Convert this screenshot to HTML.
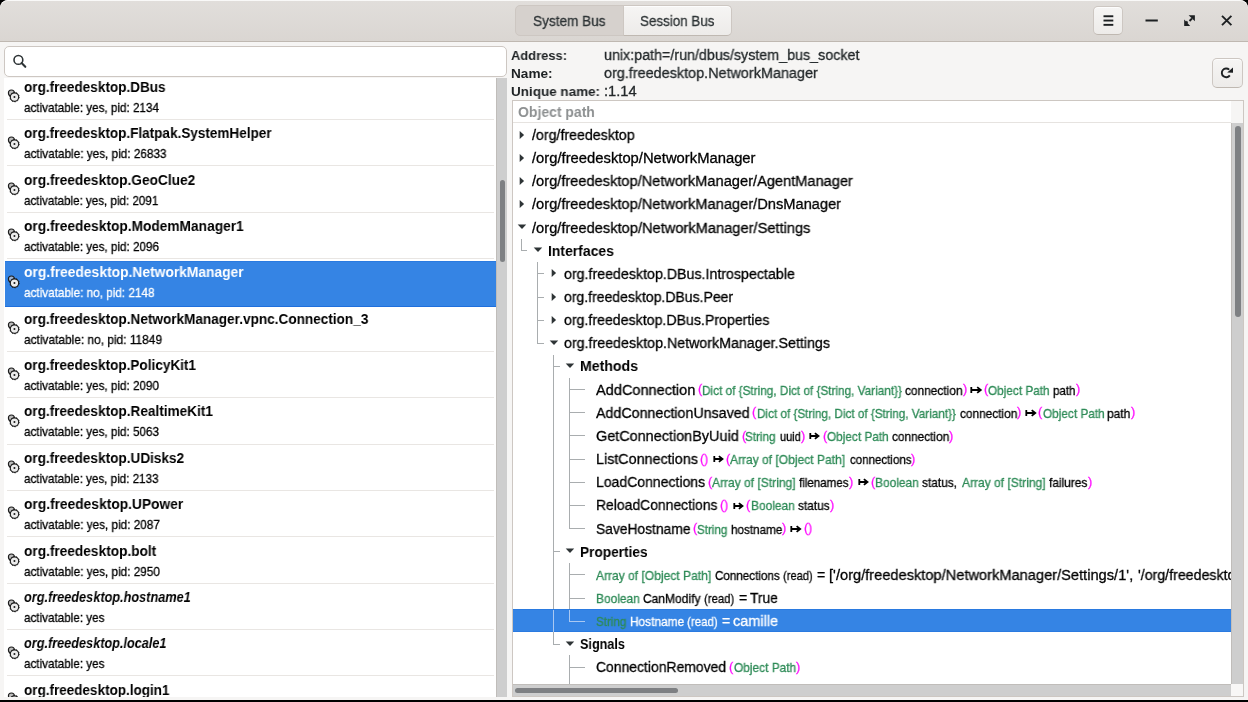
<!DOCTYPE html><html><head><meta charset="utf-8"><style>*{margin:0;padding:0;box-sizing:border-box}
html,body{width:1248px;height:702px;overflow:hidden;background:#000;font-family:"Liberation Sans", sans-serif}
.win{position:absolute;left:0;top:0;width:1248px;height:700px;background:#f6f5f4;border-radius:8px 8px 0 0;overflow:hidden}
.t{position:absolute;white-space:pre;transform-origin:0 0;will-change:transform}
.a{position:absolute}</style></head><body>
<div class="win">
<div class="a" style="left:0;top:0;width:1248px;height:42px;background:linear-gradient(to top,#dad6d2,#e1dedb);border-bottom:1px solid #bfb8b1;box-shadow:inset 0 1px rgba(255,255,255,0.8);border-radius:8px 8px 0 0"></div>
<div class="a" style="left:515px;top:5px;width:109px;height:31px;background:#d6d1cd;border:1px solid #cdc7c2;border-radius:5px 0 0 5px"></div>
<div class="a" style="left:623px;top:5px;width:109px;height:31px;background:linear-gradient(to top,#edebe9,#f6f5f4);border:1px solid #cdc7c2;border-bottom-color:#bfb8b1;border-radius:0 5px 5px 0;box-shadow:inset 0 1px rgba(255,255,255,0.8)"></div>
<div class="t" style="left:533.00px;top:13px;font-size:14.5px;font-weight:normal;font-style:normal;line-height:16.20px;color:#2e3436;-webkit-text-stroke:0.3px #2e3436;transform:scaleX(0.9385);">System Bus</div>
<div class="t" style="left:639.80px;top:13px;font-size:14.5px;font-weight:normal;font-style:normal;line-height:16.20px;color:#2e3436;-webkit-text-stroke:0.3px #2e3436;transform:scaleX(0.9242);">Session Bus</div>
<div class="a" style="left:1093px;top:6px;width:30px;height:29px;background:linear-gradient(to top,#edebe9,#f6f5f4);border:1px solid #cdc7c2;border-bottom-color:#bfb8b1;border-radius:5px;box-shadow:inset 0 1px rgba(255,255,255,0.8)"></div>
<svg class="a" style="left:0;top:0" width="1248" height="42"><g fill="#1d2022"><rect x="1103.5" y="15.3" width="9.8" height="1.9"/><rect x="1103.5" y="19.6" width="9.8" height="1.9"/><rect x="1103.5" y="23.9" width="9.8" height="1.9"/><rect x="1145.5" y="19.5" width="12.3" height="2"/><path d="M1188.6 15.2 L1194.9 15.2 L1194.9 21.2 Z"/><path d="M1184.2 19.6 L1184.2 25.9 L1190.2 25.9 Z"/></g><g stroke="#1d2022" stroke-width="1.9" fill="none"><path d="M1222 15.8 L1231.4 25.2 M1231.4 15.8 L1222 25.2"/><path d="M1189.5 21 L1192 18.5 M1185.5 23.5 L1187.5 21.5"/></g></svg>
<div class="a" style="left:4px;top:46px;width:503px;height:31px;background:#fff;border:1px solid #cdc7c2;border-radius:5px"></div>
<svg class="a" style="left:12px;top:53px" width="16" height="16"><circle cx="6.4" cy="6.9" r="4.4" fill="none" stroke="#2e3436" stroke-width="1.6"/><path d="M9.6 10.1 L13.3 13.8" stroke="#2e3436" stroke-width="2.1" stroke-linecap="round"/></svg>
<div class="a" style="left:4px;top:78px;width:492px;height:619px;background:#fff;overflow:hidden">
<div class="t" style="left:20.40px;top:1px;font-size:14.4px;font-weight:bold;font-style:normal;line-height:16.08px;color:#000;transform:scaleX(0.9418);">org.freedesktop.DBus</div>
<div class="t" style="left:20.40px;top:23px;font-size:12.9px;font-weight:normal;font-style:normal;line-height:14.41px;color:#000;-webkit-text-stroke:0.3px #000;transform:scaleX(0.9050);">activatable: yes, pid: 2134</div>
<svg class="a" style="left:0px;top:8.30px" width="20" height="20" viewBox="0 0 20 20"><circle cx="7.4" cy="7.0" r="3.0" fill="#bcbcbc" stroke="#1c1c1c" stroke-width="1.1"/><circle cx="10.5" cy="11.1" r="4.75" fill="none" stroke="#1c1c1c" stroke-width="0.9" stroke-dasharray="1.2 1.75"/><circle cx="10.5" cy="11.1" r="4.2" fill="#ececec" stroke="#1c1c1c" stroke-width="1.15"/><circle cx="10.45" cy="10.95" r="1.0" fill="#1c1c1c"/></svg>
<div class="a" style="left:2.5px;top:41.10px;width:487px;height:1px;background:#e9e6e3"></div>
<div class="t" style="left:20.40px;top:47px;font-size:14.4px;font-weight:bold;font-style:normal;line-height:16.08px;color:#000;transform:scaleX(0.9410);">org.freedesktop.Flatpak.SystemHelper</div>
<div class="t" style="left:20.40px;top:69px;font-size:12.9px;font-weight:normal;font-style:normal;line-height:14.41px;color:#000;-webkit-text-stroke:0.3px #000;transform:scaleX(0.9121);">activatable: yes, pid: 26833</div>
<svg class="a" style="left:0px;top:54.65px" width="20" height="20" viewBox="0 0 20 20"><circle cx="7.4" cy="7.0" r="3.0" fill="#bcbcbc" stroke="#1c1c1c" stroke-width="1.1"/><circle cx="10.5" cy="11.1" r="4.75" fill="none" stroke="#1c1c1c" stroke-width="0.9" stroke-dasharray="1.2 1.75"/><circle cx="10.5" cy="11.1" r="4.2" fill="#ececec" stroke="#1c1c1c" stroke-width="1.15"/><circle cx="10.45" cy="10.95" r="1.0" fill="#1c1c1c"/></svg>
<div class="a" style="left:2.5px;top:87.45px;width:487px;height:1px;background:#e9e6e3"></div>
<div class="t" style="left:20.40px;top:94px;font-size:14.4px;font-weight:bold;font-style:normal;line-height:16.08px;color:#000;transform:scaleX(0.9514);">org.freedesktop.GeoClue2</div>
<div class="t" style="left:20.40px;top:116px;font-size:12.9px;font-weight:normal;font-style:normal;line-height:14.41px;color:#000;-webkit-text-stroke:0.3px #000;transform:scaleX(0.9003);">activatable: yes, pid: 2091</div>
<svg class="a" style="left:0px;top:101.00px" width="20" height="20" viewBox="0 0 20 20"><circle cx="7.4" cy="7.0" r="3.0" fill="#bcbcbc" stroke="#1c1c1c" stroke-width="1.1"/><circle cx="10.5" cy="11.1" r="4.75" fill="none" stroke="#1c1c1c" stroke-width="0.9" stroke-dasharray="1.2 1.75"/><circle cx="10.5" cy="11.1" r="4.2" fill="#ececec" stroke="#1c1c1c" stroke-width="1.15"/><circle cx="10.45" cy="10.95" r="1.0" fill="#1c1c1c"/></svg>
<div class="a" style="left:2.5px;top:133.80px;width:487px;height:1px;background:#e9e6e3"></div>
<div class="t" style="left:20.40px;top:140px;font-size:14.4px;font-weight:bold;font-style:normal;line-height:16.08px;color:#000;transform:scaleX(0.9539);">org.freedesktop.ModemManager1</div>
<div class="t" style="left:20.40px;top:162px;font-size:12.9px;font-weight:normal;font-style:normal;line-height:14.41px;color:#000;-webkit-text-stroke:0.3px #000;transform:scaleX(0.9050);">activatable: yes, pid: 2096</div>
<svg class="a" style="left:0px;top:147.35px" width="20" height="20" viewBox="0 0 20 20"><circle cx="7.4" cy="7.0" r="3.0" fill="#bcbcbc" stroke="#1c1c1c" stroke-width="1.1"/><circle cx="10.5" cy="11.1" r="4.75" fill="none" stroke="#1c1c1c" stroke-width="0.9" stroke-dasharray="1.2 1.75"/><circle cx="10.5" cy="11.1" r="4.2" fill="#ececec" stroke="#1c1c1c" stroke-width="1.15"/><circle cx="10.45" cy="10.95" r="1.0" fill="#1c1c1c"/></svg>
<div class="a" style="left:0.5px;top:183px;width:491.5px;height:46px;background:#3584e4;border-top:1px solid #2a7ae0;border-bottom:1px solid #1f6fdc"></div>
<div class="a" style="left:2.5px;top:180.15px;width:487px;height:1px;background:#e9e6e3"></div>
<div class="t" style="left:20.40px;top:186px;font-size:14.4px;font-weight:bold;font-style:normal;line-height:16.08px;color:#fff;transform:scaleX(0.9606);">org.freedesktop.NetworkManager</div>
<div class="t" style="left:20.40px;top:208px;font-size:12.9px;font-weight:normal;font-style:normal;line-height:14.41px;color:#fff;-webkit-text-stroke:0.3px #fff;transform:scaleX(0.9104);">activatable: no, pid: 2148</div>
<svg class="a" style="left:0px;top:193.70px" width="20" height="20" viewBox="0 0 20 20"><circle cx="7.4" cy="7.0" r="3.0" fill="#9fb6d6" stroke="#1c1c1c" stroke-width="1.1"/><circle cx="10.5" cy="11.1" r="4.75" fill="none" stroke="#1c1c1c" stroke-width="0.9" stroke-dasharray="1.2 1.75"/><circle cx="10.5" cy="11.1" r="4.2" fill="#ececec" stroke="#1c1c1c" stroke-width="1.15"/><circle cx="10.45" cy="10.95" r="1.0" fill="#1c1c1c"/></svg>
<div class="t" style="left:20.40px;top:233px;font-size:14.4px;font-weight:bold;font-style:normal;line-height:16.08px;color:#000;transform:scaleX(0.9442);">org.freedesktop.NetworkManager.vpnc.Connection_3</div>
<div class="t" style="left:20.40px;top:255px;font-size:12.9px;font-weight:normal;font-style:normal;line-height:14.41px;color:#000;-webkit-text-stroke:0.3px #000;transform:scaleX(0.9228);">activatable: no, pid: 11849</div>
<svg class="a" style="left:0px;top:240.05px" width="20" height="20" viewBox="0 0 20 20"><circle cx="7.4" cy="7.0" r="3.0" fill="#bcbcbc" stroke="#1c1c1c" stroke-width="1.1"/><circle cx="10.5" cy="11.1" r="4.75" fill="none" stroke="#1c1c1c" stroke-width="0.9" stroke-dasharray="1.2 1.75"/><circle cx="10.5" cy="11.1" r="4.2" fill="#ececec" stroke="#1c1c1c" stroke-width="1.15"/><circle cx="10.45" cy="10.95" r="1.0" fill="#1c1c1c"/></svg>
<div class="a" style="left:2.5px;top:272.85px;width:487px;height:1px;background:#e9e6e3"></div>
<div class="t" style="left:20.40px;top:279px;font-size:14.4px;font-weight:bold;font-style:normal;line-height:16.08px;color:#000;transform:scaleX(0.9433);">org.freedesktop.PolicyKit1</div>
<div class="t" style="left:20.40px;top:301px;font-size:12.9px;font-weight:normal;font-style:normal;line-height:14.41px;color:#000;-webkit-text-stroke:0.3px #000;transform:scaleX(0.9050);">activatable: yes, pid: 2090</div>
<svg class="a" style="left:0px;top:286.40px" width="20" height="20" viewBox="0 0 20 20"><circle cx="7.4" cy="7.0" r="3.0" fill="#bcbcbc" stroke="#1c1c1c" stroke-width="1.1"/><circle cx="10.5" cy="11.1" r="4.75" fill="none" stroke="#1c1c1c" stroke-width="0.9" stroke-dasharray="1.2 1.75"/><circle cx="10.5" cy="11.1" r="4.2" fill="#ececec" stroke="#1c1c1c" stroke-width="1.15"/><circle cx="10.45" cy="10.95" r="1.0" fill="#1c1c1c"/></svg>
<div class="a" style="left:2.5px;top:319.20px;width:487px;height:1px;background:#e9e6e3"></div>
<div class="t" style="left:20.40px;top:325px;font-size:14.4px;font-weight:bold;font-style:normal;line-height:16.08px;color:#000;transform:scaleX(0.9443);">org.freedesktop.RealtimeKit1</div>
<div class="t" style="left:20.40px;top:347px;font-size:12.9px;font-weight:normal;font-style:normal;line-height:14.41px;color:#000;-webkit-text-stroke:0.3px #000;transform:scaleX(0.9050);">activatable: yes, pid: 5063</div>
<svg class="a" style="left:0px;top:332.75px" width="20" height="20" viewBox="0 0 20 20"><circle cx="7.4" cy="7.0" r="3.0" fill="#bcbcbc" stroke="#1c1c1c" stroke-width="1.1"/><circle cx="10.5" cy="11.1" r="4.75" fill="none" stroke="#1c1c1c" stroke-width="0.9" stroke-dasharray="1.2 1.75"/><circle cx="10.5" cy="11.1" r="4.2" fill="#ececec" stroke="#1c1c1c" stroke-width="1.15"/><circle cx="10.45" cy="10.95" r="1.0" fill="#1c1c1c"/></svg>
<div class="a" style="left:2.5px;top:365.55px;width:487px;height:1px;background:#e9e6e3"></div>
<div class="t" style="left:20.40px;top:372px;font-size:14.4px;font-weight:bold;font-style:normal;line-height:16.08px;color:#000;transform:scaleX(0.9443);">org.freedesktop.UDisks2</div>
<div class="t" style="left:20.40px;top:394px;font-size:12.9px;font-weight:normal;font-style:normal;line-height:14.41px;color:#000;-webkit-text-stroke:0.3px #000;transform:scaleX(0.9023);">activatable: yes, pid: 2133</div>
<svg class="a" style="left:0px;top:379.10px" width="20" height="20" viewBox="0 0 20 20"><circle cx="7.4" cy="7.0" r="3.0" fill="#bcbcbc" stroke="#1c1c1c" stroke-width="1.1"/><circle cx="10.5" cy="11.1" r="4.75" fill="none" stroke="#1c1c1c" stroke-width="0.9" stroke-dasharray="1.2 1.75"/><circle cx="10.5" cy="11.1" r="4.2" fill="#ececec" stroke="#1c1c1c" stroke-width="1.15"/><circle cx="10.45" cy="10.95" r="1.0" fill="#1c1c1c"/></svg>
<div class="a" style="left:2.5px;top:411.90px;width:487px;height:1px;background:#e9e6e3"></div>
<div class="t" style="left:20.40px;top:418px;font-size:14.4px;font-weight:bold;font-style:normal;line-height:16.08px;color:#000;transform:scaleX(0.9571);">org.freedesktop.UPower</div>
<div class="t" style="left:20.40px;top:440px;font-size:12.9px;font-weight:normal;font-style:normal;line-height:14.41px;color:#000;-webkit-text-stroke:0.3px #000;transform:scaleX(0.9110);">activatable: yes, pid: 2087</div>
<svg class="a" style="left:0px;top:425.45px" width="20" height="20" viewBox="0 0 20 20"><circle cx="7.4" cy="7.0" r="3.0" fill="#bcbcbc" stroke="#1c1c1c" stroke-width="1.1"/><circle cx="10.5" cy="11.1" r="4.75" fill="none" stroke="#1c1c1c" stroke-width="0.9" stroke-dasharray="1.2 1.75"/><circle cx="10.5" cy="11.1" r="4.2" fill="#ececec" stroke="#1c1c1c" stroke-width="1.15"/><circle cx="10.45" cy="10.95" r="1.0" fill="#1c1c1c"/></svg>
<div class="a" style="left:2.5px;top:458.25px;width:487px;height:1px;background:#e9e6e3"></div>
<div class="t" style="left:20.40px;top:465px;font-size:14.4px;font-weight:bold;font-style:normal;line-height:16.08px;color:#000;transform:scaleX(0.9509);">org.freedesktop.bolt</div>
<div class="t" style="left:20.40px;top:487px;font-size:12.9px;font-weight:normal;font-style:normal;line-height:14.41px;color:#000;-webkit-text-stroke:0.3px #000;transform:scaleX(0.9110);">activatable: yes, pid: 2950</div>
<svg class="a" style="left:0px;top:471.80px" width="20" height="20" viewBox="0 0 20 20"><circle cx="7.4" cy="7.0" r="3.0" fill="#bcbcbc" stroke="#1c1c1c" stroke-width="1.1"/><circle cx="10.5" cy="11.1" r="4.75" fill="none" stroke="#1c1c1c" stroke-width="0.9" stroke-dasharray="1.2 1.75"/><circle cx="10.5" cy="11.1" r="4.2" fill="#ececec" stroke="#1c1c1c" stroke-width="1.15"/><circle cx="10.45" cy="10.95" r="1.0" fill="#1c1c1c"/></svg>
<div class="a" style="left:2.5px;top:504.60px;width:487px;height:1px;background:#e9e6e3"></div>
<div class="t" style="left:20.40px;top:511px;font-size:14.4px;font-weight:bold;font-style:italic;line-height:16.08px;color:#000;transform:scaleX(0.8833);">org.freedesktop.hostname1</div>
<div class="t" style="left:20.40px;top:533px;font-size:12.9px;font-weight:normal;font-style:normal;line-height:14.41px;color:#000;-webkit-text-stroke:0.3px #000;transform:scaleX(0.9048);">activatable: yes</div>
<svg class="a" style="left:0px;top:518.15px" width="20" height="20" viewBox="0 0 20 20"><circle cx="7.4" cy="7.0" r="3.0" fill="#bcbcbc" stroke="#1c1c1c" stroke-width="1.1"/><circle cx="10.5" cy="11.1" r="4.75" fill="none" stroke="#1c1c1c" stroke-width="0.9" stroke-dasharray="1.2 1.75"/><circle cx="10.5" cy="11.1" r="4.2" fill="#ececec" stroke="#1c1c1c" stroke-width="1.15"/><circle cx="10.45" cy="10.95" r="1.0" fill="#1c1c1c"/></svg>
<div class="a" style="left:2.5px;top:550.95px;width:487px;height:1px;background:#e9e6e3"></div>
<div class="t" style="left:20.40px;top:557px;font-size:14.4px;font-weight:bold;font-style:italic;line-height:16.08px;color:#000;transform:scaleX(0.8820);">org.freedesktop.locale1</div>
<div class="t" style="left:20.40px;top:579px;font-size:12.9px;font-weight:normal;font-style:normal;line-height:14.41px;color:#000;-webkit-text-stroke:0.3px #000;transform:scaleX(0.9048);">activatable: yes</div>
<svg class="a" style="left:0px;top:564.50px" width="20" height="20" viewBox="0 0 20 20"><circle cx="7.4" cy="7.0" r="3.0" fill="#bcbcbc" stroke="#1c1c1c" stroke-width="1.1"/><circle cx="10.5" cy="11.1" r="4.75" fill="none" stroke="#1c1c1c" stroke-width="0.9" stroke-dasharray="1.2 1.75"/><circle cx="10.5" cy="11.1" r="4.2" fill="#ececec" stroke="#1c1c1c" stroke-width="1.15"/><circle cx="10.45" cy="10.95" r="1.0" fill="#1c1c1c"/></svg>
<div class="a" style="left:2.5px;top:597.30px;width:487px;height:1px;background:#e9e6e3"></div>
<div class="t" style="left:20.40px;top:604px;font-size:14.4px;font-weight:bold;font-style:normal;line-height:16.08px;color:#000;transform:scaleX(0.9380);">org.freedesktop.login1</div>
<div class="t" style="left:20.40px;top:626px;font-size:12.9px;font-weight:normal;font-style:normal;line-height:14.41px;color:#000;-webkit-text-stroke:0.3px #000;transform:scaleX(0.9048);">activatable: yes</div>
<svg class="a" style="left:0px;top:610.85px" width="20" height="20" viewBox="0 0 20 20"><circle cx="7.4" cy="7.0" r="3.0" fill="#bcbcbc" stroke="#1c1c1c" stroke-width="1.1"/><circle cx="10.5" cy="11.1" r="4.75" fill="none" stroke="#1c1c1c" stroke-width="0.9" stroke-dasharray="1.2 1.75"/><circle cx="10.5" cy="11.1" r="4.2" fill="#ececec" stroke="#1c1c1c" stroke-width="1.15"/><circle cx="10.45" cy="10.95" r="1.0" fill="#1c1c1c"/></svg>
</div>
<div class="a" style="left:496px;top:78px;width:11px;height:619px;background:#cecece;border-left:1px solid #c0bdba"></div>
<div class="a" style="left:499.5px;top:180px;width:5.5px;height:82px;background:#7e8083;border-radius:3px"></div>
<div class="t" style="left:511.40px;top:48px;font-size:13.6px;font-weight:bold;font-style:normal;line-height:15.19px;color:#1d2123;transform:scaleX(0.9504);">Address:</div>
<div class="t" style="left:511.40px;top:66px;font-size:13.6px;font-weight:bold;font-style:normal;line-height:15.19px;color:#1d2123;transform:scaleX(1.0009);">Name:</div>
<div class="t" style="left:511.40px;top:84px;font-size:13.6px;font-weight:bold;font-style:normal;line-height:15.19px;color:#1d2123;transform:scaleX(0.9912);">Unique name:</div>
<div class="t" style="left:604.00px;top:47px;font-size:14.7px;font-weight:normal;font-style:normal;line-height:16.42px;color:#23282a;-webkit-text-stroke:0.3px #23282a;transform:scaleX(0.9730);">unix:path=/run/dbus/system_bus_socket</div>
<div class="t" style="left:604.00px;top:65px;font-size:14.7px;font-weight:normal;font-style:normal;line-height:16.42px;color:#23282a;-webkit-text-stroke:0.3px #23282a;transform:scaleX(0.9808);">org.freedesktop.NetworkManager</div>
<div class="t" style="left:604.00px;top:83px;font-size:14.7px;font-weight:normal;font-style:normal;line-height:16.42px;color:#23282a;-webkit-text-stroke:0.3px #23282a;transform:scaleX(0.9917);">:1.14</div>
<div class="a" style="left:1212px;top:58px;width:31px;height:30px;background:linear-gradient(to top,#edebe9,#f6f5f4);border:1px solid #cdc7c2;border-bottom-color:#bfb8b1;border-radius:5px;box-shadow:inset 0 1px rgba(255,255,255,0.8)"></div>
<svg class="a" style="left:0;top:0" width="1248" height="100"><path d="M1229.8 75.4 A4.4 4.4 0 1 1 1229.2 69.6" fill="none" stroke="#1d2022" stroke-width="1.9"/><path d="M1227.2 72.6 L1233 67.4 L1233 72.8 Z" fill="#1d2022"/></svg>
<div class="a" style="left:512px;top:100px;width:732px;height:597px;background:#fff;border:1px solid #cdc7c2"></div>
<div class="a" style="left:513px;top:101px;width:718px;height:22px;background:#fff;border-bottom:1px solid #e6e3e0"></div>
<div class="a" style="left:1231px;top:101px;width:12px;height:22px;background:#f6f5f4"></div>
<div class="t" style="left:517.90px;top:105px;font-size:14.2px;font-weight:bold;font-style:normal;line-height:15.86px;color:#8d9091;transform:scaleX(0.9853);">Object path</div>
<div class="a" style="left:513px;top:123px;width:718px;height:561px;overflow:hidden">
<div class="a" style="left:0;top:486px;width:718px;height:23px;background:#3584e4;border-top:1px solid #2a7ae0;border-bottom:1px solid #2a7ae0"></div>
<div class="a" style="left:8px;top:115.75px;width:1px;height:12.00px;background:#a9adaf"></div>
<div class="a" style="left:8px;top:127.25px;width:6px;height:1px;background:#a9adaf"></div>
<div class="a" style="left:24px;top:138.90px;width:1px;height:81.45px;background:#a9adaf"></div>
<div class="a" style="left:24px;top:150.40px;width:7px;height:1px;background:#a9adaf"></div>
<div class="a" style="left:24px;top:173.55px;width:7px;height:1px;background:#a9adaf"></div>
<div class="a" style="left:24px;top:196.70px;width:7px;height:1px;background:#a9adaf"></div>
<div class="a" style="left:24px;top:219.85px;width:7px;height:1px;background:#a9adaf"></div>
<div class="a" style="left:40px;top:231.50px;width:1px;height:254.50px;background:#a9adaf"></div>
<div class="a" style="left:40px;top:487.00px;width:1px;height:22.00px;background:#a9c8f2"></div>
<div class="a" style="left:40px;top:509.00px;width:1px;height:12.30px;background:#a9adaf"></div>
<div class="a" style="left:40px;top:243.00px;width:7px;height:1px;background:#a9adaf"></div>
<div class="a" style="left:40px;top:428.20px;width:7px;height:1px;background:#a9adaf"></div>
<div class="a" style="left:40px;top:520.80px;width:7px;height:1px;background:#a9adaf"></div>
<div class="a" style="left:56px;top:254.65px;width:1px;height:150.90px;background:#a9adaf"></div>
<div class="a" style="left:56px;top:266.15px;width:16px;height:1px;background:#a9adaf"></div>
<div class="a" style="left:56px;top:289.30px;width:16px;height:1px;background:#a9adaf"></div>
<div class="a" style="left:56px;top:312.45px;width:16px;height:1px;background:#a9adaf"></div>
<div class="a" style="left:56px;top:335.60px;width:16px;height:1px;background:#a9adaf"></div>
<div class="a" style="left:56px;top:358.75px;width:16px;height:1px;background:#a9adaf"></div>
<div class="a" style="left:56px;top:381.90px;width:16px;height:1px;background:#a9adaf"></div>
<div class="a" style="left:56px;top:405.05px;width:16px;height:1px;background:#a9adaf"></div>
<div class="a" style="left:56px;top:439.85px;width:1px;height:46.15px;background:#a9adaf"></div>
<div class="a" style="left:56px;top:487.00px;width:1px;height:11.15px;background:#a9c8f2"></div>
<div class="a" style="left:56px;top:451.35px;width:16px;height:1px;background:#a9adaf"></div>
<div class="a" style="left:56px;top:474.50px;width:16px;height:1px;background:#a9adaf"></div>
<div class="a" style="left:56px;top:497.65px;width:16px;height:1px;background:#a9c8f2"></div>
<div class="a" style="left:56px;top:532.45px;width:1px;height:41.50px;background:#a9adaf"></div>
<div class="a" style="left:56px;top:543.95px;width:16px;height:1px;background:#a9adaf"></div>
<svg class="a" style="left:6.00px;top:6.50px" width="8" height="10"><path d="M0.7 0.9 L0.7 9.1 L5.1 5 Z" fill="#2e3436"/></svg>
<div class="t" style="left:19.40px;top:4px;font-size:14.7px;font-weight:normal;font-style:normal;line-height:16.42px;color:#000;-webkit-text-stroke:0.3px #000;transform:scaleX(0.9670);">/org/freedesktop</div>
<svg class="a" style="left:6.00px;top:29.65px" width="8" height="10"><path d="M0.7 0.9 L0.7 9.1 L5.1 5 Z" fill="#2e3436"/></svg>
<div class="t" style="left:19.40px;top:27px;font-size:14.7px;font-weight:normal;font-style:normal;line-height:16.42px;color:#000;-webkit-text-stroke:0.3px #000;transform:scaleX(1.0065);">/org/freedesktop/NetworkManager</div>
<svg class="a" style="left:6.00px;top:52.80px" width="8" height="10"><path d="M0.7 0.9 L0.7 9.1 L5.1 5 Z" fill="#2e3436"/></svg>
<div class="t" style="left:19.40px;top:50px;font-size:14.7px;font-weight:normal;font-style:normal;line-height:16.42px;color:#000;-webkit-text-stroke:0.3px #000;transform:scaleX(0.9950);">/org/freedesktop/NetworkManager/AgentManager</div>
<svg class="a" style="left:6.00px;top:75.95px" width="8" height="10"><path d="M0.7 0.9 L0.7 9.1 L5.1 5 Z" fill="#2e3436"/></svg>
<div class="t" style="left:19.40px;top:73px;font-size:14.7px;font-weight:normal;font-style:normal;line-height:16.42px;color:#000;-webkit-text-stroke:0.3px #000;transform:scaleX(0.9960);">/org/freedesktop/NetworkManager/DnsManager</div>
<svg class="a" style="left:3.50px;top:101.10px" width="10" height="8"><path d="M0.7 0.6 L9.2 0.6 L5 5.1 Z" fill="#2e3436"/></svg>
<div class="t" style="left:19.40px;top:97px;font-size:14.7px;font-weight:normal;font-style:normal;line-height:16.42px;color:#000;-webkit-text-stroke:0.3px #000;transform:scaleX(0.9974);">/org/freedesktop/NetworkManager/Settings</div>
<svg class="a" style="left:20.00px;top:124.25px" width="10" height="8"><path d="M0.7 0.6 L9.2 0.6 L5 5.1 Z" fill="#2e3436"/></svg>
<div class="t" style="left:34.80px;top:120px;font-size:14.7px;font-weight:bold;font-style:normal;line-height:16.42px;color:#000;transform:scaleX(0.9495);">Interfaces</div>
<svg class="a" style="left:38.00px;top:145.40px" width="8" height="10"><path d="M0.7 0.9 L0.7 9.1 L5.1 5 Z" fill="#2e3436"/></svg>
<div class="t" style="left:51.20px;top:143px;font-size:14.7px;font-weight:normal;font-style:normal;line-height:16.42px;color:#000;-webkit-text-stroke:0.3px #000;transform:scaleX(0.9681);">org.freedesktop.DBus.Introspectable</div>
<svg class="a" style="left:38.00px;top:168.55px" width="8" height="10"><path d="M0.7 0.9 L0.7 9.1 L5.1 5 Z" fill="#2e3436"/></svg>
<div class="t" style="left:51.20px;top:166px;font-size:14.7px;font-weight:normal;font-style:normal;line-height:16.42px;color:#000;-webkit-text-stroke:0.3px #000;transform:scaleX(0.9544);">org.freedesktop.DBus.Peer</div>
<svg class="a" style="left:38.00px;top:191.70px" width="8" height="10"><path d="M0.7 0.9 L0.7 9.1 L5.1 5 Z" fill="#2e3436"/></svg>
<div class="t" style="left:51.20px;top:189px;font-size:14.7px;font-weight:normal;font-style:normal;line-height:16.42px;color:#000;-webkit-text-stroke:0.3px #000;transform:scaleX(0.9640);">org.freedesktop.DBus.Properties</div>
<svg class="a" style="left:35.50px;top:216.85px" width="10" height="8"><path d="M0.7 0.6 L9.2 0.6 L5 5.1 Z" fill="#2e3436"/></svg>
<div class="t" style="left:51.20px;top:212px;font-size:14.7px;font-weight:normal;font-style:normal;line-height:16.42px;color:#000;-webkit-text-stroke:0.3px #000;transform:scaleX(0.9696);">org.freedesktop.NetworkManager.Settings</div>
<svg class="a" style="left:51.70px;top:240.00px" width="10" height="8"><path d="M0.7 0.6 L9.2 0.6 L5 5.1 Z" fill="#2e3436"/></svg>
<div class="t" style="left:66.90px;top:235px;font-size:14.7px;font-weight:bold;font-style:normal;line-height:16.42px;color:#000;transform:scaleX(0.9604);">Methods</div>
<svg class="a" style="left:51.70px;top:425.20px" width="10" height="8"><path d="M0.7 0.6 L9.2 0.6 L5 5.1 Z" fill="#2e3436"/></svg>
<div class="t" style="left:66.90px;top:421px;font-size:14.7px;font-weight:bold;font-style:normal;line-height:16.42px;color:#000;transform:scaleX(0.9304);">Properties</div>
<svg class="a" style="left:51.70px;top:517.80px" width="10" height="8"><path d="M0.7 0.6 L9.2 0.6 L5 5.1 Z" fill="#2e3436"/></svg>
<div class="t" style="left:66.90px;top:513px;font-size:14.7px;font-weight:bold;font-style:normal;line-height:16.42px;color:#000;transform:scaleX(0.8593);">Signals</div>
<div class="t" style="left:82.90px;top:259px;font-size:14.7px;font-weight:normal;font-style:normal;line-height:16.42px;color:#000;-webkit-text-stroke:0.3px #000;transform:scaleX(0.9895);">AddConnection</div>
<div class="t" style="left:185.20px;top:259px;font-size:13.0px;font-weight:normal;font-style:normal;line-height:14.52px;color:#ff00ff;-webkit-text-stroke:0.3px #ff00ff;transform:scaleX(0.9500);">(</div>
<div class="t" style="left:189.00px;top:261px;font-size:12.6px;font-weight:normal;font-style:normal;line-height:14.07px;color:#2e8b57;-webkit-text-stroke:0.3px #2e8b57;transform:scaleX(0.9347);">Dict of {String, Dict of {String, Variant}}</div>
<div class="t" style="left:392.40px;top:261px;font-size:12.6px;font-weight:normal;font-style:normal;line-height:14.07px;color:#000;-webkit-text-stroke:0.3px #000;transform:scaleX(0.9438);">connection</div>
<div class="t" style="left:450.00px;top:259px;font-size:13.0px;font-weight:normal;font-style:normal;line-height:14.52px;color:#ff00ff;-webkit-text-stroke:0.3px #ff00ff;transform:scaleX(0.9500);">)</div>
<svg class="a" style="left:457.00px;top:261.85px" width="13.8" height="10"><path d="M1.3 2 L1.3 8 M1.3 5 L10.3 5" stroke="#000" stroke-width="1.8" fill="none"/><path d="M7.2 2.1 L10.8 5 L7.2 7.9" stroke="#000" stroke-width="1.8" fill="none" stroke-linejoin="miter"/></svg>
<div class="t" style="left:471.00px;top:259px;font-size:13.0px;font-weight:normal;font-style:normal;line-height:14.52px;color:#ff00ff;-webkit-text-stroke:0.3px #ff00ff;transform:scaleX(0.9500);">(</div>
<div class="t" style="left:475.40px;top:261px;font-size:12.6px;font-weight:normal;font-style:normal;line-height:14.07px;color:#2e8b57;-webkit-text-stroke:0.3px #2e8b57;transform:scaleX(0.9360);">Object Path</div>
<div class="t" style="left:540.30px;top:261px;font-size:12.6px;font-weight:normal;font-style:normal;line-height:14.07px;color:#000;-webkit-text-stroke:0.3px #000;transform:scaleX(0.9137);">path</div>
<div class="t" style="left:563.00px;top:259px;font-size:13.0px;font-weight:normal;font-style:normal;line-height:14.52px;color:#ff00ff;-webkit-text-stroke:0.3px #ff00ff;transform:scaleX(0.9500);">)</div>
<div class="t" style="left:83.10px;top:282px;font-size:14.7px;font-weight:normal;font-style:normal;line-height:16.42px;color:#000;-webkit-text-stroke:0.3px #000;transform:scaleX(0.9696);">AddConnectionUnsaved</div>
<div class="t" style="left:238.80px;top:282px;font-size:13.0px;font-weight:normal;font-style:normal;line-height:14.52px;color:#ff00ff;-webkit-text-stroke:0.3px #ff00ff;transform:scaleX(0.9500);">(</div>
<div class="t" style="left:244.20px;top:284px;font-size:12.6px;font-weight:normal;font-style:normal;line-height:14.07px;color:#2e8b57;-webkit-text-stroke:0.3px #2e8b57;transform:scaleX(0.9296);">Dict of {String, Dict of {String, Variant}}</div>
<div class="t" style="left:446.60px;top:284px;font-size:12.6px;font-weight:normal;font-style:normal;line-height:14.07px;color:#000;-webkit-text-stroke:0.3px #000;transform:scaleX(0.9405);">connection</div>
<div class="t" style="left:504.00px;top:282px;font-size:13.0px;font-weight:normal;font-style:normal;line-height:14.52px;color:#ff00ff;-webkit-text-stroke:0.3px #ff00ff;transform:scaleX(0.9500);">)</div>
<svg class="a" style="left:511.50px;top:285.00px" width="13.3" height="10"><path d="M1.3 2 L1.3 8 M1.3 5 L9.8 5" stroke="#000" stroke-width="1.8" fill="none"/><path d="M6.7 2.1 L10.3 5 L6.7 7.9" stroke="#000" stroke-width="1.8" fill="none" stroke-linejoin="miter"/></svg>
<div class="t" style="left:525.40px;top:282px;font-size:13.0px;font-weight:normal;font-style:normal;line-height:14.52px;color:#ff00ff;-webkit-text-stroke:0.3px #ff00ff;transform:scaleX(0.9500);">(</div>
<div class="t" style="left:530.10px;top:284px;font-size:12.6px;font-weight:normal;font-style:normal;line-height:14.07px;color:#2e8b57;-webkit-text-stroke:0.3px #2e8b57;transform:scaleX(0.9375);">Object Path</div>
<div class="t" style="left:594.10px;top:284px;font-size:12.6px;font-weight:normal;font-style:normal;line-height:14.07px;color:#000;-webkit-text-stroke:0.3px #000;transform:scaleX(0.9504);">path</div>
<div class="t" style="left:617.50px;top:282px;font-size:13.0px;font-weight:normal;font-style:normal;line-height:14.52px;color:#ff00ff;-webkit-text-stroke:0.3px #ff00ff;transform:scaleX(0.9500);">)</div>
<div class="t" style="left:83.10px;top:305px;font-size:14.7px;font-weight:normal;font-style:normal;line-height:16.42px;color:#000;-webkit-text-stroke:0.3px #000;transform:scaleX(0.9819);">GetConnectionByUuid</div>
<div class="t" style="left:228.90px;top:306px;font-size:13.0px;font-weight:normal;font-style:normal;line-height:14.52px;color:#ff00ff;-webkit-text-stroke:0.3px #ff00ff;transform:scaleX(0.9500);">(</div>
<div class="t" style="left:232.40px;top:307px;font-size:12.6px;font-weight:normal;font-style:normal;line-height:14.07px;color:#2e8b57;-webkit-text-stroke:0.3px #2e8b57;transform:scaleX(0.9238);">String</div>
<div class="t" style="left:266.70px;top:307px;font-size:12.6px;font-weight:normal;font-style:normal;line-height:14.07px;color:#000;-webkit-text-stroke:0.3px #000;transform:scaleX(0.8777);">uuid</div>
<div class="t" style="left:288.00px;top:306px;font-size:13.0px;font-weight:normal;font-style:normal;line-height:14.52px;color:#ff00ff;-webkit-text-stroke:0.3px #ff00ff;transform:scaleX(0.9500);">)</div>
<svg class="a" style="left:295.80px;top:308.15px" width="12.5" height="10"><path d="M1.3 2 L1.3 8 M1.3 5 L9.0 5" stroke="#000" stroke-width="1.8" fill="none"/><path d="M5.9 2.1 L9.5 5 L5.9 7.9" stroke="#000" stroke-width="1.8" fill="none" stroke-linejoin="miter"/></svg>
<div class="t" style="left:310.20px;top:306px;font-size:13.0px;font-weight:normal;font-style:normal;line-height:14.52px;color:#ff00ff;-webkit-text-stroke:0.3px #ff00ff;transform:scaleX(0.9500);">(</div>
<div class="t" style="left:313.80px;top:307px;font-size:12.6px;font-weight:normal;font-style:normal;line-height:14.07px;color:#2e8b57;-webkit-text-stroke:0.3px #2e8b57;transform:scaleX(0.9375);">Object Path</div>
<div class="t" style="left:378.80px;top:307px;font-size:12.6px;font-weight:normal;font-style:normal;line-height:14.07px;color:#000;-webkit-text-stroke:0.3px #000;transform:scaleX(0.9389);">connection</div>
<div class="t" style="left:436.00px;top:306px;font-size:13.0px;font-weight:normal;font-style:normal;line-height:14.52px;color:#ff00ff;-webkit-text-stroke:0.3px #ff00ff;transform:scaleX(0.9500);">)</div>
<div class="t" style="left:83.10px;top:328px;font-size:14.7px;font-weight:normal;font-style:normal;line-height:16.42px;color:#000;-webkit-text-stroke:0.3px #000;transform:scaleX(0.9750);">ListConnections</div>
<div class="t" style="left:187.40px;top:329px;font-size:13.0px;font-weight:normal;font-style:normal;line-height:14.52px;color:#ff00ff;-webkit-text-stroke:0.3px #ff00ff;transform:scaleX(0.9500);">()</div>
<svg class="a" style="left:200.00px;top:331.30px" width="12.5" height="10"><path d="M1.3 2 L1.3 8 M1.3 5 L9.0 5" stroke="#000" stroke-width="1.8" fill="none"/><path d="M5.9 2.1 L9.5 5 L5.9 7.9" stroke="#000" stroke-width="1.8" fill="none" stroke-linejoin="miter"/></svg>
<div class="t" style="left:213.00px;top:329px;font-size:13.0px;font-weight:normal;font-style:normal;line-height:14.52px;color:#ff00ff;-webkit-text-stroke:0.3px #ff00ff;transform:scaleX(0.9500);">(</div>
<div class="t" style="left:217.30px;top:330px;font-size:12.6px;font-weight:normal;font-style:normal;line-height:14.07px;color:#2e8b57;-webkit-text-stroke:0.3px #2e8b57;transform:scaleX(0.9551);">Array of [Object Path]</div>
<div class="t" style="left:336.50px;top:330px;font-size:12.6px;font-weight:normal;font-style:normal;line-height:14.07px;color:#000;-webkit-text-stroke:0.3px #000;transform:scaleX(0.9149);">connections</div>
<div class="t" style="left:398.00px;top:329px;font-size:13.0px;font-weight:normal;font-style:normal;line-height:14.52px;color:#ff00ff;-webkit-text-stroke:0.3px #ff00ff;transform:scaleX(0.9500);">)</div>
<div class="t" style="left:83.10px;top:351px;font-size:14.7px;font-weight:normal;font-style:normal;line-height:16.42px;color:#000;-webkit-text-stroke:0.3px #000;transform:scaleX(0.9543);">LoadConnections</div>
<div class="t" style="left:194.60px;top:352px;font-size:13.0px;font-weight:normal;font-style:normal;line-height:14.52px;color:#ff00ff;-webkit-text-stroke:0.3px #ff00ff;transform:scaleX(0.9500);">(</div>
<div class="t" style="left:198.70px;top:353px;font-size:12.6px;font-weight:normal;font-style:normal;line-height:14.07px;color:#2e8b57;-webkit-text-stroke:0.3px #2e8b57;transform:scaleX(0.9554);">Array of [String]</div>
<div class="t" style="left:286.20px;top:353px;font-size:12.6px;font-weight:normal;font-style:normal;line-height:14.07px;color:#000;-webkit-text-stroke:0.3px #000;transform:scaleX(0.9201);">filenames</div>
<div class="t" style="left:336.00px;top:352px;font-size:13.0px;font-weight:normal;font-style:normal;line-height:14.52px;color:#ff00ff;-webkit-text-stroke:0.3px #ff00ff;transform:scaleX(0.9500);">)</div>
<svg class="a" style="left:344.50px;top:354.45px" width="12.5" height="10"><path d="M1.3 2 L1.3 8 M1.3 5 L9.0 5" stroke="#000" stroke-width="1.8" fill="none"/><path d="M5.9 2.1 L9.5 5 L5.9 7.9" stroke="#000" stroke-width="1.8" fill="none" stroke-linejoin="miter"/></svg>
<div class="t" style="left:357.60px;top:352px;font-size:13.0px;font-weight:normal;font-style:normal;line-height:14.52px;color:#ff00ff;-webkit-text-stroke:0.3px #ff00ff;transform:scaleX(0.9500);">(</div>
<div class="t" style="left:362.30px;top:353px;font-size:12.6px;font-weight:normal;font-style:normal;line-height:14.07px;color:#2e8b57;-webkit-text-stroke:0.3px #2e8b57;transform:scaleX(0.9455);">Boolean</div>
<div class="t" style="left:409.40px;top:353px;font-size:12.6px;font-weight:normal;font-style:normal;line-height:14.07px;color:#000;-webkit-text-stroke:0.3px #000;transform:scaleX(0.9459);">status,</div>
<div class="t" style="left:448.70px;top:353px;font-size:12.6px;font-weight:normal;font-style:normal;line-height:14.07px;color:#2e8b57;-webkit-text-stroke:0.3px #2e8b57;transform:scaleX(0.9554);">Array of [String]</div>
<div class="t" style="left:536.20px;top:353px;font-size:12.6px;font-weight:normal;font-style:normal;line-height:14.07px;color:#000;-webkit-text-stroke:0.3px #000;transform:scaleX(0.9456);">failures</div>
<div class="t" style="left:574.70px;top:352px;font-size:13.0px;font-weight:normal;font-style:normal;line-height:14.52px;color:#ff00ff;-webkit-text-stroke:0.3px #ff00ff;transform:scaleX(0.9500);">)</div>
<div class="t" style="left:83.10px;top:374px;font-size:14.7px;font-weight:normal;font-style:normal;line-height:16.42px;color:#000;-webkit-text-stroke:0.3px #000;transform:scaleX(0.9477);">ReloadConnections</div>
<div class="t" style="left:207.00px;top:375px;font-size:13.0px;font-weight:normal;font-style:normal;line-height:14.52px;color:#ff00ff;-webkit-text-stroke:0.3px #ff00ff;transform:scaleX(0.9500);">()</div>
<svg class="a" style="left:219.50px;top:377.60px" width="12.5" height="10"><path d="M1.3 2 L1.3 8 M1.3 5 L9.0 5" stroke="#000" stroke-width="1.8" fill="none"/><path d="M5.9 2.1 L9.5 5 L5.9 7.9" stroke="#000" stroke-width="1.8" fill="none" stroke-linejoin="miter"/></svg>
<div class="t" style="left:232.70px;top:375px;font-size:13.0px;font-weight:normal;font-style:normal;line-height:14.52px;color:#ff00ff;-webkit-text-stroke:0.3px #ff00ff;transform:scaleX(0.9500);">(</div>
<div class="t" style="left:237.50px;top:376px;font-size:12.6px;font-weight:normal;font-style:normal;line-height:14.07px;color:#2e8b57;-webkit-text-stroke:0.3px #2e8b57;transform:scaleX(0.9455);">Boolean</div>
<div class="t" style="left:284.60px;top:376px;font-size:12.6px;font-weight:normal;font-style:normal;line-height:14.07px;color:#000;-webkit-text-stroke:0.3px #000;transform:scaleX(0.9432);">status</div>
<div class="t" style="left:316.60px;top:375px;font-size:13.0px;font-weight:normal;font-style:normal;line-height:14.52px;color:#ff00ff;-webkit-text-stroke:0.3px #ff00ff;transform:scaleX(0.9500);">)</div>
<div class="t" style="left:83.10px;top:398px;font-size:14.7px;font-weight:normal;font-style:normal;line-height:16.42px;color:#000;-webkit-text-stroke:0.3px #000;transform:scaleX(0.9410);">SaveHostname</div>
<div class="t" style="left:179.60px;top:398px;font-size:13.0px;font-weight:normal;font-style:normal;line-height:14.52px;color:#ff00ff;-webkit-text-stroke:0.3px #ff00ff;transform:scaleX(0.9500);">(</div>
<div class="t" style="left:184.10px;top:400px;font-size:12.6px;font-weight:normal;font-style:normal;line-height:14.07px;color:#2e8b57;-webkit-text-stroke:0.3px #2e8b57;transform:scaleX(0.9178);">String</div>
<div class="t" style="left:217.80px;top:400px;font-size:12.6px;font-weight:normal;font-style:normal;line-height:14.07px;color:#000;-webkit-text-stroke:0.3px #000;transform:scaleX(0.9293);">hostname</div>
<div class="t" style="left:269.40px;top:398px;font-size:13.0px;font-weight:normal;font-style:normal;line-height:14.52px;color:#ff00ff;-webkit-text-stroke:0.3px #ff00ff;transform:scaleX(0.9500);">)</div>
<svg class="a" style="left:276.70px;top:400.75px" width="13.2" height="10"><path d="M1.3 2 L1.3 8 M1.3 5 L9.7 5" stroke="#000" stroke-width="1.8" fill="none"/><path d="M6.6 2.1 L10.2 5 L6.6 7.9" stroke="#000" stroke-width="1.8" fill="none" stroke-linejoin="miter"/></svg>
<div class="t" style="left:290.70px;top:398px;font-size:13.0px;font-weight:normal;font-style:normal;line-height:14.52px;color:#ff00ff;-webkit-text-stroke:0.3px #ff00ff;transform:scaleX(0.9500);">()</div>
<div class="t" style="left:83.10px;top:446px;font-size:12.6px;font-weight:normal;font-style:normal;line-height:14.07px;color:#2e8b57;-webkit-text-stroke:0.3px #2e8b57;transform:scaleX(0.9559);">Array of [Object Path]</div>
<div class="t" style="left:201.60px;top:446px;font-size:12.6px;font-weight:normal;font-style:normal;line-height:14.07px;color:#000;-webkit-text-stroke:0.3px #000;transform:scaleX(0.9241);">Connections</div>
<div class="t" style="left:270.00px;top:446px;font-size:12.6px;font-weight:normal;font-style:normal;line-height:14.07px;color:#000;-webkit-text-stroke:0.3px #000;transform:scaleX(0.8811);">(read)</div>
<div class="t" style="left:303.70px;top:444px;font-size:14.7px;font-weight:normal;font-style:normal;line-height:16.42px;color:#000;-webkit-text-stroke:0.3px #000;transform:scaleX(0.9670);">=</div>
<div class="t" style="left:316.00px;top:444px;font-size:14.7px;font-weight:normal;font-style:normal;line-height:16.42px;color:#000;-webkit-text-stroke:0.3px #000;transform:scaleX(0.9963);">['/org/freedesktop/NetworkManager/Settings/1',</div>
<div class="t" style="left:624.60px;top:444px;font-size:14.7px;font-weight:normal;font-style:normal;line-height:16.42px;color:#000;-webkit-text-stroke:0.3px #000;transform:scaleX(0.9670);">'/org/freedesktop/NetworkManager/Settings/2']</div>
<div class="t" style="left:83.10px;top:469px;font-size:12.6px;font-weight:normal;font-style:normal;line-height:14.07px;color:#2e8b57;-webkit-text-stroke:0.3px #2e8b57;transform:scaleX(0.9455);">Boolean</div>
<div class="t" style="left:130.20px;top:469px;font-size:12.6px;font-weight:normal;font-style:normal;line-height:14.07px;color:#000;-webkit-text-stroke:0.3px #000;transform:scaleX(0.9551);">CanModify</div>
<div class="t" style="left:191.40px;top:469px;font-size:12.6px;font-weight:normal;font-style:normal;line-height:14.07px;color:#000;-webkit-text-stroke:0.3px #000;transform:scaleX(0.8960);">(read)</div>
<div class="t" style="left:225.90px;top:467px;font-size:14.7px;font-weight:normal;font-style:normal;line-height:16.42px;color:#000;-webkit-text-stroke:0.3px #000;transform:scaleX(0.9670);">=</div>
<div class="t" style="left:237.40px;top:467px;font-size:14.7px;font-weight:normal;font-style:normal;line-height:16.42px;color:#000;-webkit-text-stroke:0.3px #000;transform:scaleX(0.9374);">True</div>
<div class="t" style="left:83.10px;top:492px;font-size:12.6px;font-weight:normal;font-style:normal;line-height:14.07px;color:#2e8b57;-webkit-text-stroke:0.3px #2e8b57;transform:scaleX(0.9178);">String</div>
<div class="t" style="left:116.80px;top:492px;font-size:12.6px;font-weight:normal;font-style:normal;line-height:14.07px;color:#fff;-webkit-text-stroke:0.3px #fff;transform:scaleX(0.9424);">Hostname</div>
<div class="t" style="left:174.40px;top:492px;font-size:12.6px;font-weight:normal;font-style:normal;line-height:14.07px;color:#fff;-webkit-text-stroke:0.3px #fff;transform:scaleX(0.9109);">(read)</div>
<div class="t" style="left:208.70px;top:490px;font-size:14.7px;font-weight:normal;font-style:normal;line-height:16.42px;color:#fff;-webkit-text-stroke:0.3px #fff;transform:scaleX(0.9670);">=</div>
<div class="t" style="left:220.00px;top:490px;font-size:14.7px;font-weight:normal;font-style:normal;line-height:16.42px;color:#fff;-webkit-text-stroke:0.3px #fff;transform:scaleX(0.9865);">camille</div>
<div class="t" style="left:83.30px;top:536px;font-size:14.7px;font-weight:normal;font-style:normal;line-height:16.42px;color:#000;-webkit-text-stroke:0.3px #000;transform:scaleX(0.9484);">ConnectionRemoved</div>
<div class="t" style="left:216.00px;top:537px;font-size:13.0px;font-weight:normal;font-style:normal;line-height:14.52px;color:#ff00ff;-webkit-text-stroke:0.3px #ff00ff;transform:scaleX(0.9500);">(</div>
<div class="t" style="left:220.80px;top:538px;font-size:12.6px;font-weight:normal;font-style:normal;line-height:14.07px;color:#2e8b57;-webkit-text-stroke:0.3px #2e8b57;transform:scaleX(0.9451);">Object Path</div>
<div class="t" style="left:283.00px;top:537px;font-size:13.0px;font-weight:normal;font-style:normal;line-height:14.52px;color:#ff00ff;-webkit-text-stroke:0.3px #ff00ff;transform:scaleX(0.9500);">)</div>
</div>
<div class="a" style="left:1231px;top:123px;width:12px;height:561px;background:#cecece;border-left:1px solid #c0bdba"></div>
<div class="a" style="left:1235px;top:126px;width:5.5px;height:191px;background:#7e8083;border-radius:3px"></div>
<div class="a" style="left:513px;top:684px;width:718px;height:12px;background:#cecece;border-top:1px solid #c0bdba"></div>
<div class="a" style="left:515px;top:688px;width:163px;height:5px;background:#7e8083;border-radius:3px"></div>
<div class="a" style="left:1231px;top:684px;width:12px;height:12px;background:#f8f7f6"></div>
</div>
</body></html>
